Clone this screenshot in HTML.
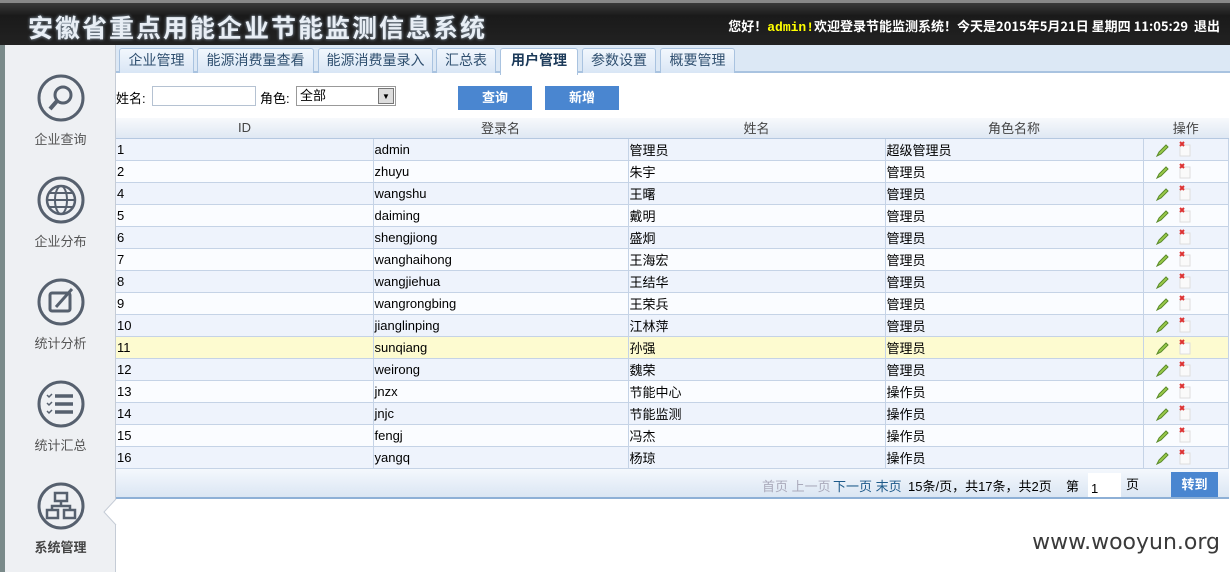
<!DOCTYPE html>
<html><head><meta charset="utf-8"><style>
*{margin:0;padding:0;box-sizing:border-box}
body{width:1230px;height:572px;overflow:hidden;background:#fff;font-family:"Liberation Sans","Noto Sans CJK SC",sans-serif;font-size:13px;color:#000;position:relative}
#hd{position:absolute;left:0;top:0;width:1230px;height:45px;background:linear-gradient(#3a3a3a,#1a1a1a 30%,#222);border-top:3px solid #888}
#hd .t{position:absolute;left:28px;top:6px;font-size:25px;font-weight:bold;color:#e8eef5;letter-spacing:2px;font-family:"Noto Sans CJK SC",sans-serif;text-shadow:0 0 3px #9ab}
#hd .r{position:absolute;right:10px;top:13px;font-size:13px;font-weight:bold;color:#fff;font-family:"Noto Sans CJK SC","Liberation Mono",monospace}
#hd .r b{color:#ff0;font-family:"Liberation Mono",monospace}
#lb{position:absolute;left:0;top:45px;width:5px;height:527px;background:#7a8a8a}
#sb{position:absolute;left:5px;top:45px;width:111px;height:527px;background:#eef0f3;border-right:1px solid #c5ccd6}
.it{position:absolute;left:0;width:111px;text-align:center;color:#555;font-size:13px}
.it svg{display:block;margin:0 auto 6px}
#tabs{position:absolute;left:116px;top:45px;width:1114px;height:28px;background:#dce8f5;border-bottom:2px solid #a9c3e0}
.tab{position:absolute;top:3px;height:25px;border:1px solid #a9c3e0;border-bottom:none;background:linear-gradient(#f2f7fd,#d9e6f5);color:#2f4f6f;font-size:14px;text-align:center;line-height:23px;border-radius:3px 3px 0 0}
.tab.on{background:#fff;color:#1d3b5a;font-weight:bold;height:27px}
#tb{position:absolute;left:116px;top:88px;font-size:13px}
input.x{position:absolute;border:1px solid #b5c2d2;height:20px;background:#fff}
.btn{position:absolute;top:86px;height:24px;width:74px;background:#4a86d0;color:#fff;font-weight:bold;text-align:center;line-height:24px;font-size:13px}
table{position:absolute;left:116px;top:118px;width:1113px;border-collapse:collapse;font-size:13px}
th{height:20px;background:linear-gradient(#f7f9fc,#dfe8f3);color:#444;font-weight:normal;border-bottom:1px solid #b5c8e0;font-size:13px}
td{height:22px;border:1px solid #c5d3e6;border-left:none;padding-left:1px}
td:first-child{border-left:none}
tr.a td{background:#eef3fc}
tr.b td{background:#fafcff}
tr.y td{background:#fdfbd0}
#pg{position:absolute;left:116px;top:469px;width:1113px;height:30px;background:linear-gradient(#f4f8fd,#dbe6f3);border-bottom:2px solid #8eb0d6;font-size:13px}
#wm{position:absolute;right:10px;top:530px;font-size:22px;color:#3a3a3a;font-family:"DejaVu Sans",sans-serif}
</style></head><body>
<div id="hd"><div class="t">安徽省重点用能企业节能监测信息系统</div>
<div class="r">您好！<b>admin!</b>欢迎登录节能监测系统！今天是2015年5月21日 星期四 11:05:29 &nbsp;退出</div></div>
<div id="lb"></div>
<div id="sb">
<div class="it" style="top:28px"><svg width="50" height="50" viewBox="0 0 50 50"><circle cx="25" cy="25" r="22" fill="none" stroke="#56606e" stroke-width="3"/><circle cx="27" cy="22" r="8" fill="none" stroke="#56606e" stroke-width="3"/><path d="M21 28L14 36" stroke="#56606e" stroke-width="4"/></svg>企业查询</div>
<div class="it" style="top:130px"><svg width="50" height="50" viewBox="0 0 50 50"><circle cx="25" cy="25" r="22" fill="none" stroke="#56606e" stroke-width="3"/><circle cx="25" cy="25" r="14" fill="none" stroke="#56606e" stroke-width="2.5"/><ellipse cx="25" cy="25" rx="6" ry="14" fill="none" stroke="#56606e" stroke-width="2"/><path d="M11 25H39M13 18H37M13 32H37" stroke="#56606e" stroke-width="2"/></svg>企业分布</div>
<div class="it" style="top:232px"><svg width="50" height="50" viewBox="0 0 50 50"><circle cx="25" cy="25" r="22" fill="none" stroke="#56606e" stroke-width="3"/><rect x="14" y="16" width="20" height="18" rx="2" fill="none" stroke="#56606e" stroke-width="3"/><path d="M20 30L36 12" stroke="#56606e" stroke-width="3"/></svg>统计分析</div>
<div class="it" style="top:334px"><svg width="50" height="50" viewBox="0 0 50 50"><circle cx="25" cy="25" r="22" fill="none" stroke="#56606e" stroke-width="3"/><path d="M19 17H37M19 25H37M19 33H37" stroke="#56606e" stroke-width="3.5"/><path d="M11 16l2 2 3-3M11 24l2 2 3-3M11 32l2 2 3-3" stroke="#56606e" stroke-width="1.5" fill="none"/></svg>统计汇总</div>
<div class="it" style="top:436px;font-weight:bold;color:#444"><svg width="50" height="50" viewBox="0 0 50 50"><circle cx="25" cy="25" r="22" fill="none" stroke="#56606e" stroke-width="3"/><rect x="19" y="12" width="12" height="8" fill="none" stroke="#56606e" stroke-width="2.5"/><rect x="11" y="29" width="11" height="8" fill="none" stroke="#56606e" stroke-width="2.5"/><rect x="28" y="29" width="11" height="8" fill="none" stroke="#56606e" stroke-width="2.5"/><path d="M25 20V25M16 29V25H34V29" stroke="#56606e" stroke-width="2.5" fill="none"/></svg>系统管理</div>
<svg style="position:absolute;left:98px;top:454px" width="14" height="26"><path d="M13 0L1 13L13 26" fill="#fff" stroke="#c5ccd6"/></svg>
</div>
<div id="tabs">
<div class="tab" style="left:3px;width:75px">企业管理</div>
<div class="tab" style="left:81px;width:117px">能源消费量查看</div>
<div class="tab" style="left:202px;width:115px">能源消费量录入</div>
<div class="tab" style="left:320px;width:60px">汇总表</div>
<div class="tab on" style="left:384px;width:78px">用户管理</div>
<div class="tab" style="left:466px;width:74px">参数设置</div>
<div class="tab" style="left:544px;width:75px">概要管理</div>
</div>
<div id="tb">姓名:</div>
<input class="x" style="left:152px;top:86px;width:104px">
<div style="position:absolute;left:260px;top:88px">角色:</div>
<div style="position:absolute;left:296px;top:86px;width:100px;height:20px;border:1px solid #999;background:#fff;font-size:13px;padding-left:3px;line-height:18px">全部<span style="position:absolute;right:1px;top:1px;width:16px;height:16px;border:1px solid #777;background:#ddd;font-size:8px;text-align:center;line-height:16px">▼</span></div>
<div class="btn" style="left:458px">查询</div>
<div class="btn" style="left:545px">新增</div>
<table>
<tr><th style="width:257px">ID</th><th style="width:255px">登录名</th><th style="width:257px">姓名</th><th style="width:258px">角色名称</th><th>操作</th></tr>
<tr class="a"><td>1</td><td>admin</td><td>管理员</td><td>超级管理员</td><td></td></tr>
</table>
<script>
var d=[[2,"zhuyu","朱宇","管理员"],[4,"wangshu","王曙","管理员"],[5,"daiming","戴明","管理员"],[6,"shengjiong","盛炯","管理员"],[7,"wanghaihong","王海宏","管理员"],[8,"wangjiehua","王结华","管理员"],[9,"wangrongbing","王荣兵","管理员"],[10,"jianglinping","江林萍","管理员"],[11,"sunqiang","孙强","管理员"],[12,"weirong","魏荣","管理员"],[13,"jnzx","节能中心","操作员"],[14,"jnjc","节能监测","操作员"],[15,"fengj","冯杰","操作员"],[16,"yangq","杨琼","操作员"]];
var t=document.querySelector("table");var ic='<svg width="14" height="14" style="margin:4px 8px 0 10px"><path d="M2 13L4 9L11 2L13 4L6 11Z" fill="#9acb4a" stroke="#5a8a2a" stroke-width="1"/></svg><svg width="14" height="16"><rect x="3" y="4" width="10" height="11" fill="#fafafa" stroke="#ddd"/><path d="M3 1L7 5M7 1L3 5" stroke="#d33" stroke-width="2"/></svg>';
t.rows[1].cells[4].innerHTML=ic;
d.forEach(function(r,i){var tr=t.insertRow();tr.className=r[0]==11?"y":(i%2?"a":"b");r.forEach(function(v){tr.insertCell().textContent=v});tr.insertCell().innerHTML=ic});
</script>
<div id="pg">
<span style="position:absolute;left:646px;top:7px;color:#aab">首页 上一页</span>
<span style="position:absolute;left:717px;top:7px;color:#1d5a8a">下一页 末页</span>
<span style="position:absolute;left:792px;top:7px">15条/页，共17条，共2页</span>
<span style="position:absolute;left:950px;top:7px">第</span>
<input class="x" style="left:972px;top:4px;width:33px;height:24px;border:none;font-size:13px;padding:6px 0 0 3px" value="1">
<span style="position:absolute;left:1010px;top:5px">页</span>
<div style="position:absolute;left:1055px;top:3px;width:47px;height:25px;background:#4a86d0;color:#fff;font-weight:bold;text-align:center;line-height:25px">转到</div>
</div>
<div id="wm">www.wooyun.org</div>
</body></html>
